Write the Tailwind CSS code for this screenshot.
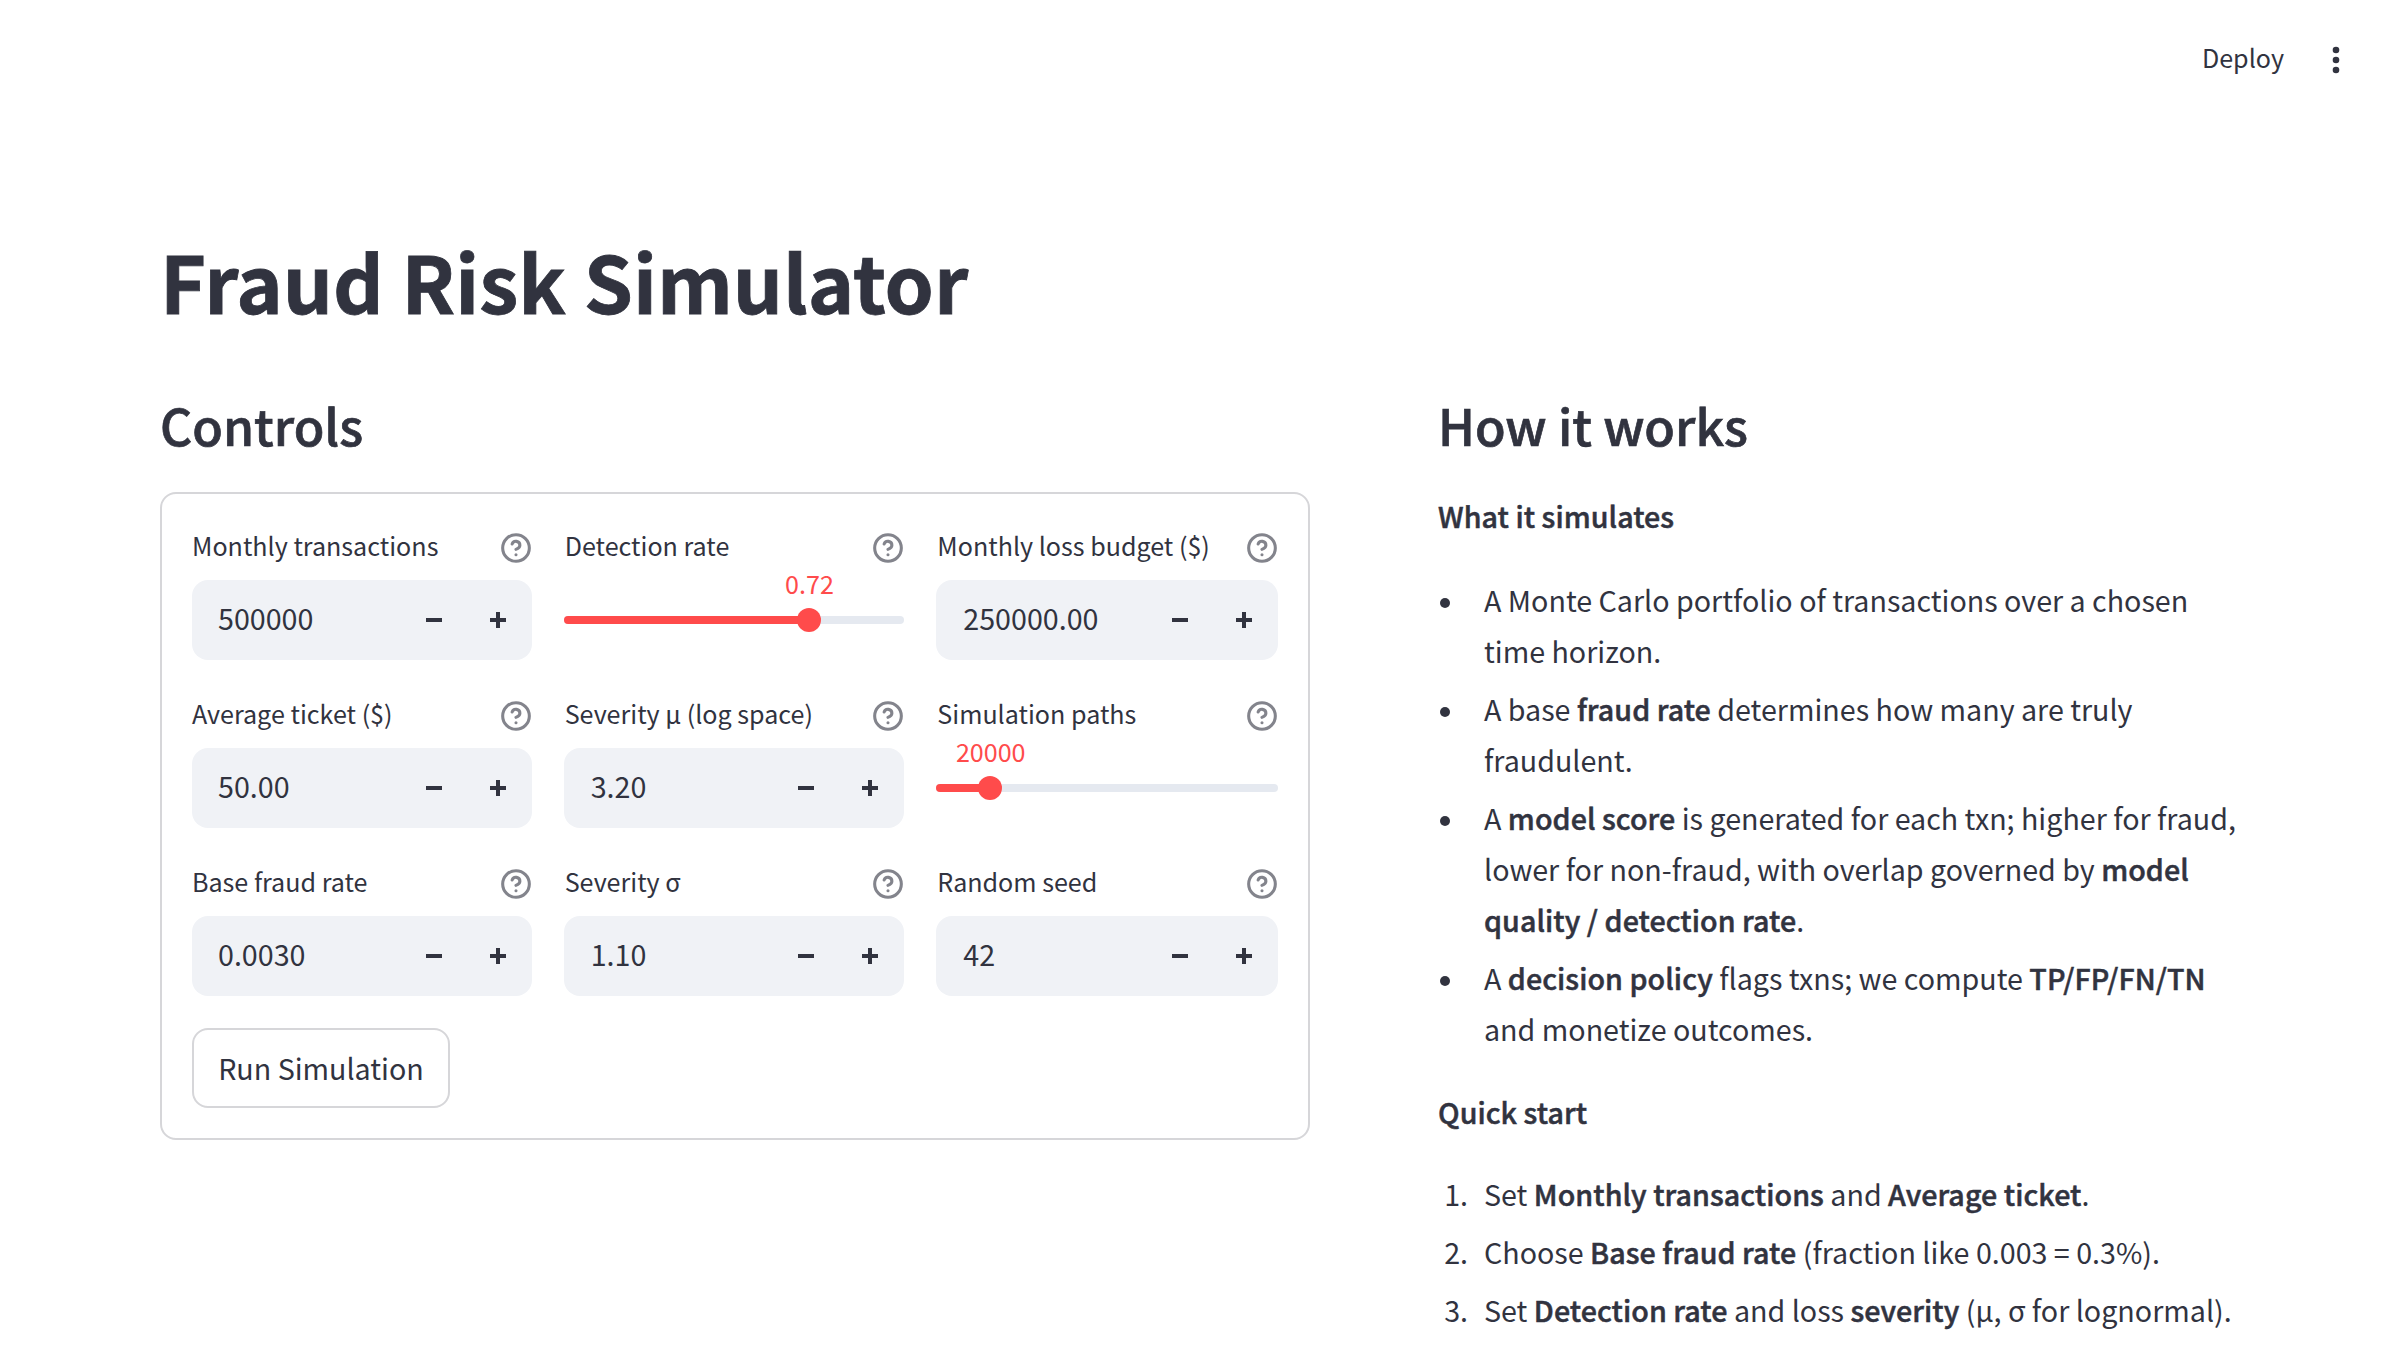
<!DOCTYPE html>
<html lang="en">
<head>
<meta charset="utf-8">
<title>Fraud Risk Simulator</title>
<script src="https://cdn.jsdelivr.net/npm/@tailwindcss/browser@4"></script>
</head>
<body class="h-[1350px] w-[2400px] overflow-hidden bg-white font-['Noto_Sans_CJK_SC',sans-serif] text-[28.65px] text-[#31333f]">
<svg class="hidden">
  <symbol id="help" viewBox="0 0 24 24" fill="none" stroke="currentColor" stroke-width="2.3" stroke-linecap="round" stroke-linejoin="round">
    <circle cx="12" cy="12" r="10"/><path d="M9.09 9a3 3 0 0 1 5.83 1c0 2-3 3-3 3"/><path d="M12 17h.01"/>
  </symbol>
  <symbol id="minus" viewBox="0 0 16 16"><path fill="currentColor" d="M0 6h16v4H0z"/></symbol>
  <symbol id="plus" viewBox="0 0 16 16"><path fill="currentColor" d="M0 6h6V0h4v6h6v4h-6v6H6v-6H0z"/></symbol>
</svg>

<header class="flex h-[120px] items-center justify-end gap-[48px] pr-[60px]">
  <span class="pb-[6px] text-[25.1px] leading-[40px]">Deploy</span>
  <svg class="h-[28px] w-[8px]" viewBox="0 0 8 28" fill="currentColor"><circle cx="4" cy="4" r="3.3"/><circle cx="4" cy="14" r="3.3"/><circle cx="4" cy="24" r="3.3"/></svg>
</header>

<main class="px-[160px] pt-[107px]">
  <h1 class="text-[78.8px] font-bold leading-[106px] [-webkit-text-stroke:0.8px]">Fraud Risk Simulator</h1>
  <div class="mt-[57px] flex gap-[128px]">
    <section class="w-[1150px] shrink-0">
      <h2 class="text-[49.9px] font-medium leading-[68px] [-webkit-text-stroke:0.7px]">Controls</h2>
      <form class="mt-[34px] rounded-[16px] border-2 border-[#31333f]/20 p-[30px]">
        <div class="grid grid-cols-[340px_340px_342px] gap-[32px]">

          <div class="h-[136px]">
            <div class="mb-[8px] flex h-[48px] items-center justify-between"><span class="pb-[6px] text-[25.1px] leading-[40px]">Monthly transactions</span><svg class="size-[32px] text-[#83848c]"><use href="#help"/></svg></div>
            <div class="flex h-[80px] items-center rounded-[16px] bg-[#f0f2f6] px-[26px]"><span class="grow pb-[3px]">500000</span><svg class="mr-[48px] size-[16px]"><use href="#minus"/></svg><svg class="size-[16px]"><use href="#plus"/></svg></div>
          </div>

          <div class="h-[136px]">
            <div class="mb-[8px] flex h-[48px] items-center justify-between"><span class="pb-[6px] pl-[0.67px] text-[25.1px] leading-[40px]">Detection rate</span><svg class="size-[32px] text-[#83848c]"><use href="#help"/></svg></div>
            <div class="relative flex h-[80px] items-center">
              <div class="h-[8px] w-full overflow-hidden rounded-[4px] bg-[#e5e9f0]"><div class="h-full bg-[#ff4b4b]" style="width:72%"></div></div>
              <div class="absolute top-[28px] size-[24px] -translate-x-1/2 rounded-full bg-[#ff4b4b]" style="left:72%"></div>
              <span class="absolute top-[-17px] -translate-x-1/2 pl-[1.4px] text-[25.1px] leading-[40px] text-[#ff4b4b]" style="left:72%">0.72</span>
            </div>
          </div>

          <div class="h-[136px]">
            <div class="mb-[8px] flex h-[48px] items-center justify-between"><span class="pb-[6px] pl-[1.3px] text-[25.1px] leading-[40px]">Monthly loss budget ($)</span><svg class="size-[32px] text-[#83848c]"><use href="#help"/></svg></div>
            <div class="flex h-[80px] items-center rounded-[16px] bg-[#f0f2f6] pl-[27.3px] pr-[26px]"><span class="grow pb-[3px]">250000.00</span><svg class="mr-[48px] size-[16px]"><use href="#minus"/></svg><svg class="size-[16px]"><use href="#plus"/></svg></div>
          </div>

          <div class="h-[136px]">
            <div class="mb-[8px] flex h-[48px] items-center justify-between"><span class="pb-[6px] text-[25.1px] leading-[40px]">Average ticket ($)</span><svg class="size-[32px] text-[#83848c]"><use href="#help"/></svg></div>
            <div class="flex h-[80px] items-center rounded-[16px] bg-[#f0f2f6] px-[26px]"><span class="grow pb-[3px]">50.00</span><svg class="mr-[48px] size-[16px]"><use href="#minus"/></svg><svg class="size-[16px]"><use href="#plus"/></svg></div>
          </div>

          <div class="h-[136px]">
            <div class="mb-[8px] flex h-[48px] items-center justify-between"><span class="pb-[6px] pl-[0.67px] text-[25.1px] leading-[40px]">Severity μ (log space)</span><svg class="size-[32px] text-[#83848c]"><use href="#help"/></svg></div>
            <div class="flex h-[80px] items-center rounded-[16px] bg-[#f0f2f6] pl-[26.67px] pr-[26px]"><span class="grow pb-[3px]">3.20</span><svg class="mr-[48px] size-[16px]"><use href="#minus"/></svg><svg class="size-[16px]"><use href="#plus"/></svg></div>
          </div>

          <div class="h-[136px]">
            <div class="mb-[8px] flex h-[48px] items-center justify-between"><span class="pb-[6px] pl-[1.3px] text-[25.1px] leading-[40px]">Simulation paths</span><svg class="size-[32px] text-[#83848c]"><use href="#help"/></svg></div>
            <div class="relative flex h-[80px] items-center">
              <div class="h-[8px] w-full overflow-hidden rounded-[4px] bg-[#e5e9f0]"><div class="h-full bg-[#ff4b4b]" style="width:15.8%"></div></div>
              <div class="absolute top-[28px] size-[24px] -translate-x-1/2 rounded-full bg-[#ff4b4b]" style="left:15.8%"></div>
              <span class="absolute top-[-17px] -translate-x-1/2 pl-[1.4px] text-[25.1px] leading-[40px] text-[#ff4b4b]" style="left:15.8%">20000</span>
            </div>
          </div>

          <div class="h-[136px]">
            <div class="mb-[8px] flex h-[48px] items-center justify-between"><span class="pb-[6px] text-[25.1px] leading-[40px]">Base fraud rate</span><svg class="size-[32px] text-[#83848c]"><use href="#help"/></svg></div>
            <div class="flex h-[80px] items-center rounded-[16px] bg-[#f0f2f6] px-[26px]"><span class="grow pb-[3px]">0.0030</span><svg class="mr-[48px] size-[16px]"><use href="#minus"/></svg><svg class="size-[16px]"><use href="#plus"/></svg></div>
          </div>

          <div class="h-[136px]">
            <div class="mb-[8px] flex h-[48px] items-center justify-between"><span class="pb-[6px] pl-[0.67px] text-[25.1px] leading-[40px]">Severity σ</span><svg class="size-[32px] text-[#83848c]"><use href="#help"/></svg></div>
            <div class="flex h-[80px] items-center rounded-[16px] bg-[#f0f2f6] pl-[26.67px] pr-[26px]"><span class="grow pb-[3px]">1.10</span><svg class="mr-[48px] size-[16px]"><use href="#minus"/></svg><svg class="size-[16px]"><use href="#plus"/></svg></div>
          </div>

          <div class="h-[136px]">
            <div class="mb-[8px] flex h-[48px] items-center justify-between"><span class="pb-[6px] pl-[1.3px] text-[25.1px] leading-[40px]">Random seed</span><svg class="size-[32px] text-[#83848c]"><use href="#help"/></svg></div>
            <div class="flex h-[80px] items-center rounded-[16px] bg-[#f0f2f6] pl-[27.3px] pr-[26px]"><span class="grow pb-[3px]">42</span><svg class="mr-[48px] size-[16px]"><use href="#minus"/></svg><svg class="size-[16px]"><use href="#plus"/></svg></div>
          </div>
        </div>
        <button type="button" class="mt-[32px] flex h-[80px] w-[258px] items-center justify-center rounded-[16px] border-2 border-[#31333f]/20"><span class="pt-px">Run Simulation</span></button>
      </form>
    </section>

    <section class="w-[802px] whitespace-nowrap leading-[51.2px]">
      <h2 class="text-[49.9px] font-medium leading-[68px] [-webkit-text-stroke:0.7px]">How it works</h2>
      <p class="mt-[32px]"><strong class="font-medium tracking-[0.05px] [-webkit-text-stroke:0.5px]">What it simulates</strong></p>
      <ul class="mt-[33px] flex flex-col gap-[6.4px]">
        <li class="flex gap-[34px] before:ml-[2px] before:mt-[24px] before:size-[10px] before:rounded-full before:bg-[#31333f]"><span>A Monte Carlo portfolio of transactions over a chosen<br>time horizon.</span></li>
        <li class="flex gap-[34px] before:ml-[2px] before:mt-[24px] before:size-[10px] before:rounded-full before:bg-[#31333f]"><span>A base <strong class="font-medium tracking-[0.05px] [-webkit-text-stroke:0.5px]">fraud rate</strong> determines how many are truly<br>fraudulent.</span></li>
        <li class="flex gap-[34px] before:ml-[2px] before:mt-[24px] before:size-[10px] before:rounded-full before:bg-[#31333f]"><span>A <strong class="font-medium tracking-[0.05px] [-webkit-text-stroke:0.5px]">model score</strong> is generated for each txn; higher for fraud,<br>lower for non-fraud, with overlap governed by <strong class="font-medium tracking-[0.05px] [-webkit-text-stroke:0.5px]">model<br>quality / detection rate</strong>.</span></li>
        <li class="flex gap-[34px] before:ml-[2px] before:mt-[24px] before:size-[10px] before:rounded-full before:bg-[#31333f]"><span>A <strong class="font-medium tracking-[0.05px] [-webkit-text-stroke:0.5px]">decision policy</strong> flags txns; we compute <strong class="font-medium tracking-[0.05px] [-webkit-text-stroke:0.5px]">TP/FP/FN/TN</strong><br>and monetize outcomes.</span></li>
      </ul>
      <p class="mt-[32px]"><strong class="font-medium tracking-[0.05px] [-webkit-text-stroke:0.5px]">Quick start</strong></p>
      <ol class="mt-[31px] flex flex-col gap-[6.4px]">
        <li class="flex"><span class="w-[30px] text-right">1.</span><span class="ml-[16px]">Set <strong class="font-medium tracking-[0.05px] [-webkit-text-stroke:0.5px]">Monthly transactions</strong> and <strong class="font-medium tracking-[0.05px] [-webkit-text-stroke:0.5px]">Average ticket</strong>.</span></li>
        <li class="flex"><span class="w-[30px] text-right">2.</span><span class="ml-[16px]">Choose <strong class="font-medium tracking-[0.05px] [-webkit-text-stroke:0.5px]">Base fraud rate</strong> (fraction like 0.003 = 0.3%).</span></li>
        <li class="flex"><span class="w-[30px] text-right">3.</span><span class="ml-[16px]">Set <strong class="font-medium tracking-[0.05px] [-webkit-text-stroke:0.5px]">Detection rate</strong> and loss <strong class="font-medium tracking-[0.05px] [-webkit-text-stroke:0.5px]">severity</strong> (μ, σ for lognormal).</span></li>
      </ol>
    </section>
  </div>
</main>
</body>
</html>
